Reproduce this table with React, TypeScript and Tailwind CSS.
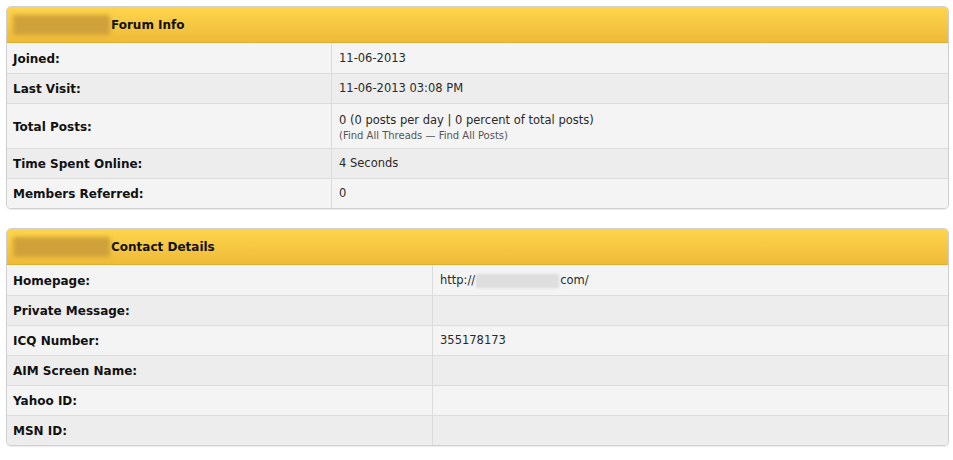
import React from "react";

type Row = { label: string; value?: React.ReactNode; tall?: boolean };

function Blur() {
  return <span className="mr-[1px] inline-block h-[20px] w-[97px] rounded-[2px] bg-[#cfa13a] blur-[2px]" />;
}

function Section({ title, rows, labelW }: { title: string; rows: Row[]; labelW: string }) {
  return (
    <section className="overflow-hidden rounded-[5px] border border-[#cfcfcf] bg-white shadow-[0_1px_1px_rgba(0,0,0,0.08)]">
      <header className="flex h-[36px] items-center border-b border-[#e3ad2e] bg-gradient-to-b from-[#fed54b] to-[#efba3a] px-[6px] pt-[1px] text-[12px] font-bold text-[#111]">
        <Blur />
        {title}
      </header>
      {rows.map((r, i) => (
        <div
          key={r.label}
          className={`flex ${r.tall ? "h-[45px]" : "h-[30px]"} border-t border-[#dcdcdc] ${i % 2 === 0 ? "bg-[#f4f4f4]" : "bg-[#ededed]"} ${i === 0 ? "border-t-0" : ""}`}
        >
          <div className={`${labelW} flex shrink-0 items-center border-r border-[#dcdcdc] px-[6px] pt-[1px] text-[12px] font-bold text-[#111]`}>
            {r.label}
          </div>
          <div className="flex flex-1 items-center px-[7px] pt-[1px] text-[11.5px] text-[#2a2a2a]">{r.value}</div>
        </div>
      ))}
    </section>
  );
}

export default function App() {
  const forum: Row[] = [
    { label: "Joined:", value: "11-06-2013" },
    { label: "Last Visit:", value: "11-06-2013 03:08 PM" },
    {
      label: "Total Posts:",
      tall: true,
      value: (
        <div className="leading-[17px]">
          <div>0 (0 posts per day | 0 percent of total posts)</div>
          <div className="text-[10px] leading-[13px] text-[#555]">(Find All Threads — Find All Posts)</div>
        </div>
      ),
    },
    { label: "Time Spent Online:", value: "4 Seconds" },
    { label: "Members Referred:", value: "0" },
  ];
  const contact: Row[] = [
    {
      label: "Homepage:",
      value: (
        <span className="flex items-center">
          http://
          <span className="mx-[1px] inline-block h-[14px] w-[83px] bg-[#dedede] blur-[1px]" />
          com/
        </span>
      ),
    },
    { label: "Private Message:" },
    { label: "ICQ Number:", value: "355178173" },
    { label: "AIM Screen Name:" },
    { label: "Yahoo ID:" },
    { label: "MSN ID:" },
  ];
  return (
    <div className="min-h-[460px] bg-white pl-[6px] pr-[4px] pt-[6px] font-['DejaVu_Sans',sans-serif]">
      <Section title="Forum Info" rows={forum} labelW="w-[325px]" />
      <div className="h-[19px]" />
      <Section title="Contact Details" rows={contact} labelW="w-[426px]" />
    </div>
  );
}
